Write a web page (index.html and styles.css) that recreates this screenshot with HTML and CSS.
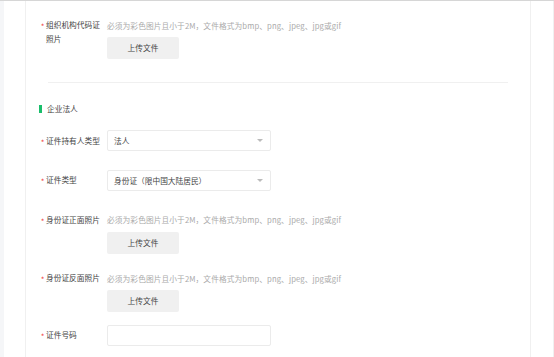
FILE: index.html
```html
<!DOCTYPE html>
<html>
<head>
	<meta charset="utf-8">
	<title>企业认证</title>
	<link rel="stylesheet" href="styles.css">
</head>
<body>
	<div class="page">
		<div class="rail-left"></div>
		<div class="card">
			<div class="form-item upload-item">
				<div class="label"><span class="req">*</span><span class="label-text">组织机构代码证照片</span></div>
				<div class="control">
					<div class="hint">必须为彩色图片且小于2M，文件格式为bmp、png、jpeg、jpg或gif</div>
					<a href="#" class="upload-btn">上传文件</a>
				</div>
			</div>

			<div class="divider"></div>

			<div class="section-title"><span class="bar"></span>企业法人</div>

			<div class="form-item select-item">
				<div class="label"><span class="req">*</span><span class="label-text">证件持有人类型</span></div>
				<div class="control">
					<div class="select"><span>法人</span><span class="caret"></span></div>
				</div>
			</div>

			<div class="form-item select-item">
				<div class="label"><span class="req">*</span><span class="label-text">证件类型</span></div>
				<div class="control">
					<div class="select"><span>身份证（限中国大陆居民）</span><span class="caret"></span></div>
				</div>
			</div>

			<div class="form-item upload-item">
				<div class="label"><span class="req">*</span><span class="label-text">身份证正面照片</span></div>
				<div class="control">
					<div class="hint">必须为彩色图片且小于2M，文件格式为bmp、png、jpeg、jpg或gif</div>
					<a href="#" class="upload-btn">上传文件</a>
				</div>
			</div>

			<div class="form-item upload-item last-upload">
				<div class="label"><span class="req">*</span><span class="label-text">身份证反面照片</span></div>
				<div class="control">
					<div class="hint">必须为彩色图片且小于2M，文件格式为bmp、png、jpeg、jpg或gif</div>
					<a href="#" class="upload-btn">上传文件</a>
				</div>
			</div>

			<div class="form-item">
				<div class="label"><span class="req">*</span><span class="label-text">证件号码</span></div>
				<div class="control">
					<div class="input"></div>
				</div>
			</div>
		</div>
		<div class="rail-right"></div>
	</div>
</body>
</html>
```

FILE: styles.css
```css
body {
	margin: 0;
	background: #fff;
	font-family: "Noto Sans CJK SC", "Noto Sans", sans-serif;
	font-size: 7.7px;
	color: #333;
	overflow: hidden;
}
.page {
	display: flex;
	height: 356px;
	border-top: 1px solid #d6d6d6;
	overflow: hidden;
}
.rail-left {
	width: 4px;
	flex: none;
	background-color: #f5f6f8;
	margin-right: 21px;
}
.card {
	width: 506px;
	flex: none;
	box-sizing: border-box;
	border-left: 1px solid #f0f0f0;
	border-right: 1px solid #f0f0f0;
	padding: 13.5px 13px 0 13px;
}
.rail-right {
	flex: 1;
	margin-left: 22px;
	border-left: 1px solid #f0f0f0;
}
.form-item {
	display: flex;
	margin-bottom: 18.5px;
}
.upload-item {
	margin-bottom: 14px;
}
.last-upload {
	margin-bottom: 12.5px;
}
.label {
	width: 68px;
	flex: none;
	display: flex;
	padding-top: 3.5px;
	line-height: 14px;
	color: #444;
}
.req {
	width: 7px;
	flex: none;
	color: #f04646;
	font-size: 8px;
	line-height: 14px;
	text-align: center;
	padding-top: 2px;
	box-sizing: border-box;
}
.label-text {
	width: 57px;
}
.control {
	display: flex;
	flex-direction: column;
	align-items: flex-start;
}
.hint {
	line-height: 21px;
	color: #aaa;
	white-space: nowrap;
	letter-spacing: 0.1px;
}
.upload-btn {
	display: inline-block;
	width: 72px;
	height: 22px;
	line-height: 22px;
	margin-top: 1.5px;
	text-align: center;
	background-color: #f0f0f0;
	border-radius: 2px;
	color: #444;
	text-decoration: none;
}
.divider {
	height: 1px;
	background-color: #f0f0f0;
	margin: 22.5px 9px 0 9px;
}
.section-title {
	display: flex;
	align-items: center;
	height: 12px;
	line-height: 12px;
	margin-top: 20px;
	margin-bottom: 15.5px;
	color: #444;
}
.bar {
	width: 3px;
	height: 8px;
	background-color: #19be6b;
	margin-right: 5px;
}
.select,
.input {
	width: 164px;
	height: 21px;
	box-sizing: border-box;
	border: 1px solid #ebebeb;
	border-radius: 2px;
}
.select {
	display: flex;
	align-items: center;
	justify-content: space-between;
	padding: 0 7px 0 6px;
	color: #444;
}
.caret {
	width: 0;
	height: 0;
	border-left: 3px solid transparent;
	border-right: 3px solid transparent;
	border-top: 3px solid #bbb;
}
```
